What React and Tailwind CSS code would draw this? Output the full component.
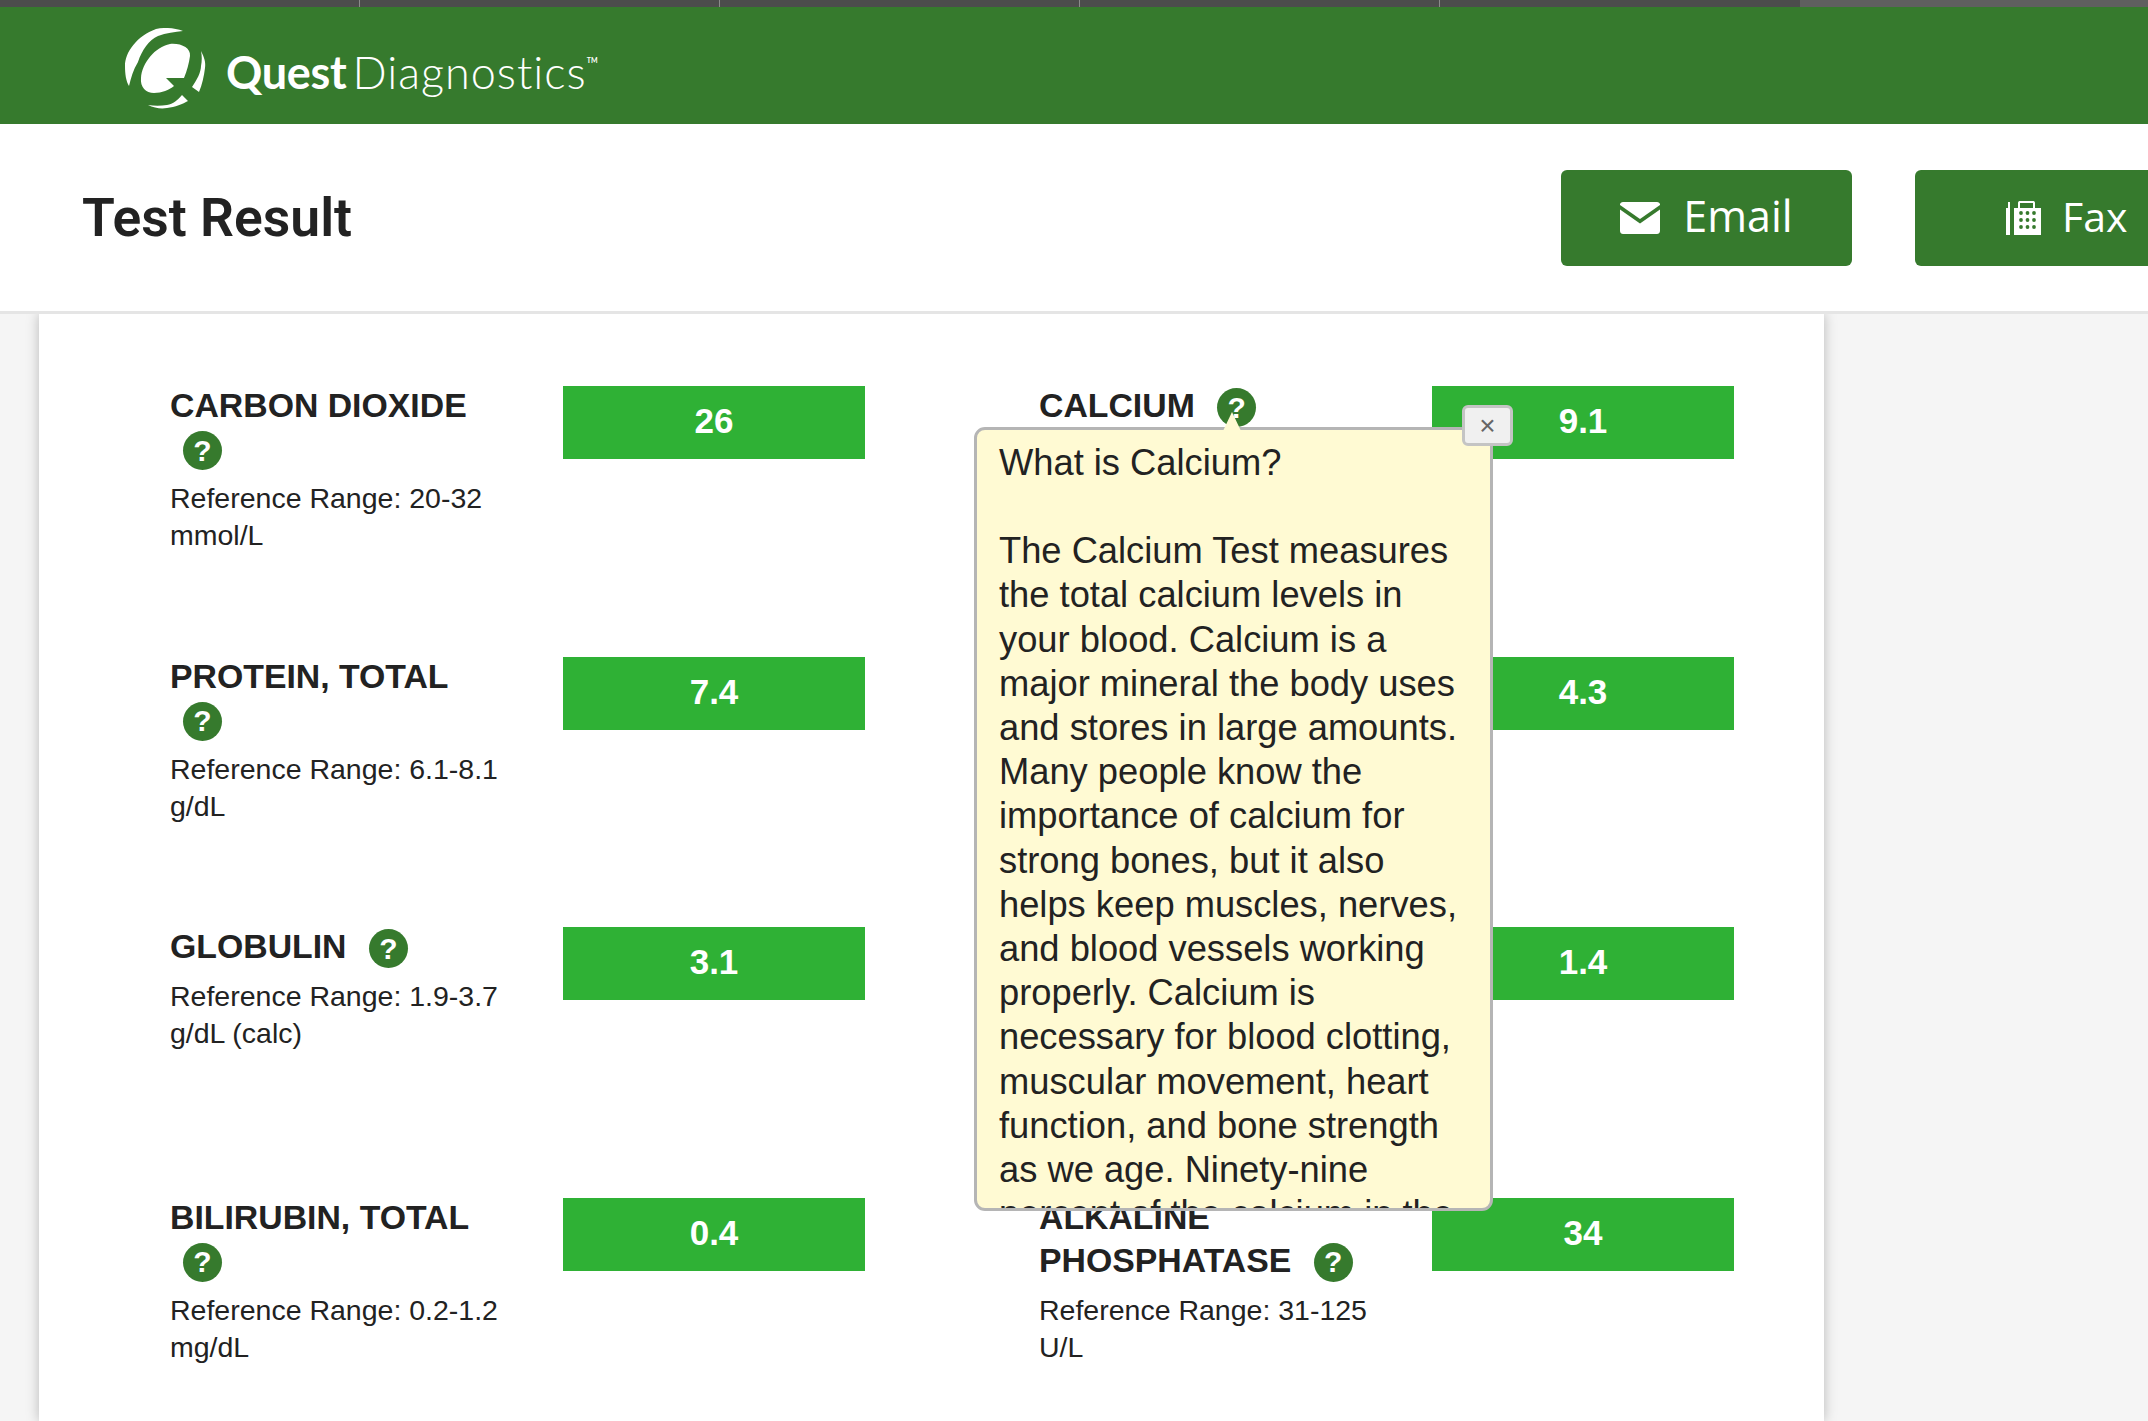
import React from "react";

const results = [
    { name: "CARBON DIOXIDE", value: "26", range: "Reference Range: 20-32 mmol/L" },
    { name: "CALCIUM", value: "9.1" },
    { name: "PROTEIN, TOTAL", value: "7.4", range: "Reference Range: 6.1-8.1 g/dL" },
    { value: "4.3" },
    { name: "GLOBULIN", value: "3.1", range: "Reference Range: 1.9-3.7 g/dL (calc)" },
    { value: "1.4" },
    { name: "BILIRUBIN, TOTAL", value: "0.4", range: "Reference Range: 0.2-1.2 mg/dL" },
    { name: "ALKALINE PHOSPHATASE", value: "34", range: "Reference Range: 31-125 U/L" },
];

const QuestMark = () => (
    <svg viewBox="0 0 81 81" className="w-[81px] h-[81px] shrink-0 mt-[5px]" fill="#fff">
        <path d="M58 3C50 0 40 -1 31 1C12 8 0 24 0 38C0 46 1 53 4 58C6 50 8 42 13 34C17 22 24 12 33 8C41 5 50 4 58 3Z" />
        <path d="M65 28C66 20 56 15 45 16C30 19 17 35 16 50C15 59 21 65 29 65C37 65 44 62 49 58L41 50L59 50C62 43 64 35 65 28Z" />
        <path d="M76 23C79 29 81 34 80 40C79 48 77 57 74 64L67 59C72 52 76 44 76 38C77 33 77 28 76 23Z" />
        <path d="M23 77C29 80 36 81 42 80C50 79 58 76 63 73L57 67C53 72 48 76 42 77C36 78 29 78 23 77Z" />
    </svg>
);

const MailIcon = () => (
    <svg viewBox="0 0 40 32" className="w-10 h-8 shrink-0">
        <path d="M3 0H37C38.500 0 40 1 40 2.500V3L20 17L0 3V2.500C0 1 1.500 0 3 0Z" fill="#fff" />
        <path d="M0 7.500L20 21.500L40 7.500V29C40 31 38.500 32 37 32H3C1.500 32 0 31 0 29Z" fill="#fff" />
    </svg>
);

const FaxIcon = () => (
    <svg viewBox="0 0 35 35" className="w-[35px] h-[35px] shrink-0">
        <path d="M0 8H2V2H4V35H0Z" fill="#fff" />
        <path fillRule="evenodd" d="M8 8H12V3C12 1.500 13 1 14 1H27C28 1 29 1.500 29 3V8H35V35H8ZM14 3V8H27V3Z" fill="#fff" />
        {[13, 20, 27].map((cy) =>
            [15, 21.5, 28].map((cx) => <circle key={`${cx}-${cy}`} cx={cx} cy={cy} r="1.900" fill="#367a2d" />)
        )}
    </svg>
);

const HelpIcon = () => (
    <span className="inline-flex items-center justify-center align-middle w-[39px] h-[39px] ml-[13px] -mt-[1px] rounded-full bg-[#367a2d] text-white text-[30px] leading-none font-bold">
        ?
    </span>
);

const ResultCell = ({ name, value, range }) => (
    <div className="flex items-start h-[270.5px]">
        <div className="w-[393px] shrink-0">
            <div className="w-[334px] -mt-[2px]">
                {name && (
                    <h3 className="text-[33.800px] leading-[43px] font-bold text-[#222]">
                        {name} <HelpIcon />
                    </h3>
                )}
                {range && <p className="mt-[10px] text-[28.500px] leading-[37px] text-[#222]">{range}</p>}
            </div>
        </div>
        <div className="w-[302px] h-[73px] pb-[2px] flex items-center justify-center bg-[#2fb135] text-white text-[35px] font-bold">
            {value}
        </div>
    </div>
);

const CalciumTip = () => (
    <div className="absolute left-[974px] top-[427px] w-[519px] h-[784px] z-10">
        <div className="w-full h-full overflow-hidden rounded-[11px] border-[3px] border-[#b5b5b5] bg-[#fffad3] pl-[22px] pr-[20px] pt-[11px] text-[36.300px] leading-[44.200px] text-[#222]">
            <p>What is Calcium?</p>
            <p className="mt-[44px]">
                The Calcium Test measures the total calcium levels in your blood. Calcium is a major mineral the body
                uses and stores in large amounts. Many people know the importance of calcium for strong bones, but it
                also helps keep muscles, nerves, and blood vessels working properly. Calcium is necessary for blood
                clotting, muscular movement, heart function, and bone strength as we age. Ninety-nine percent of the
                calcium in the
            </p>
        </div>
        {/* arrow up to the help icon */}
        <svg viewBox="0 0 18 19" className="absolute left-[249px] -top-[15px] w-[18px] h-[19px]">
            <path d="M9 0L0 19H18Z" fill="#fffad3" />
        </svg>
        <button className="absolute right-[-20px] -top-[22px] w-[51px] h-[41px] flex items-center justify-center rounded-[6px] border-[3px] border-[#c4c4c4] bg-[#f0f0f0] text-[#666] text-[28px] leading-none">
            ×
        </button>
    </div>
);

const App = () => {
    return (
        <div className="relative w-[2148px] h-[1421px] overflow-hidden bg-[#f5f5f5] font-['Liberation_Sans',Arial,sans-serif]">
            {/* browser tabs strip */}
            <div className="flex h-[7px]">
                <div className="w-[360px] bg-[#4c4c4c] border-r border-[#8a8a8a]"></div>
                <div className="w-[360px] bg-[#4c4c4c] border-r border-[#8a8a8a]"></div>
                <div className="w-[360px] bg-[#4c4c4c] border-r border-[#8a8a8a]"></div>
                <div className="w-[360px] bg-[#4c4c4c] border-r border-[#8a8a8a]"></div>
                <div className="w-[360px] bg-[#4c4c4c]"></div>
                <div className="flex-1 bg-[#5f5f5f]"></div>
            </div>

            <header className="flex items-center h-[117px] pl-[125px] bg-[#367a2d] text-white font-['Lato',sans-serif]">
                <QuestMark />
                <div className="flex items-start ml-[20px] mt-[13px]">
                    <span className="text-[45px] leading-none font-bold tracking-[-0.3px]">Quest</span>
                    <span className="ml-[6px] text-[45px] leading-none font-light tracking-[1px]">Diagnostics</span>
                    <span className="text-[7px] leading-none font-bold mt-[7px]">TM</span>
                </div>
            </header>

            <div className="relative z-[1] flex items-center justify-between h-[190px] pl-[82px] bg-white border-b-[3px] border-[#e5e5e5]">
                <h1 className="text-[53.500px] leading-none font-semibold text-[#222] font-['Roboto',sans-serif] mt-[1px]">Test Result</h1>
                <div className="flex gap-[63px] shrink-0 mr-[-20px] font-['Open_Sans',sans-serif]">
                    <button className="flex items-center justify-center gap-[23px] w-[291px] h-[96px] rounded-[6px] bg-[#367a2d] text-white text-[43px] leading-[88px]">
                        <MailIcon />
                        <span className="-mt-[3px]">Email</span>
                    </button>
                    <button className="flex items-center gap-[21px] w-[253px] h-[96px] pl-[91px] rounded-[6px] bg-[#367a2d] text-white text-[41px]">
                        <FaxIcon />
                        <span className="-mt-[2px]">Fax</span>
                    </button>
                </div>
            </div>

            <main className="ml-[39px] w-[1785px] h-[1107px] pt-[72px] pl-[131px] bg-white shadow-[0_0_12px_rgba(0,0,0,0.25)]">
                <div className="grid grid-cols-[869px_1fr]">
                    {results.map((r, i) => (
                        <ResultCell key={i} name={r.name} value={r.value} range={r.range} />
                    ))}
                </div>
            </main>

            <CalciumTip />
        </div>
    );
};

export default App;
